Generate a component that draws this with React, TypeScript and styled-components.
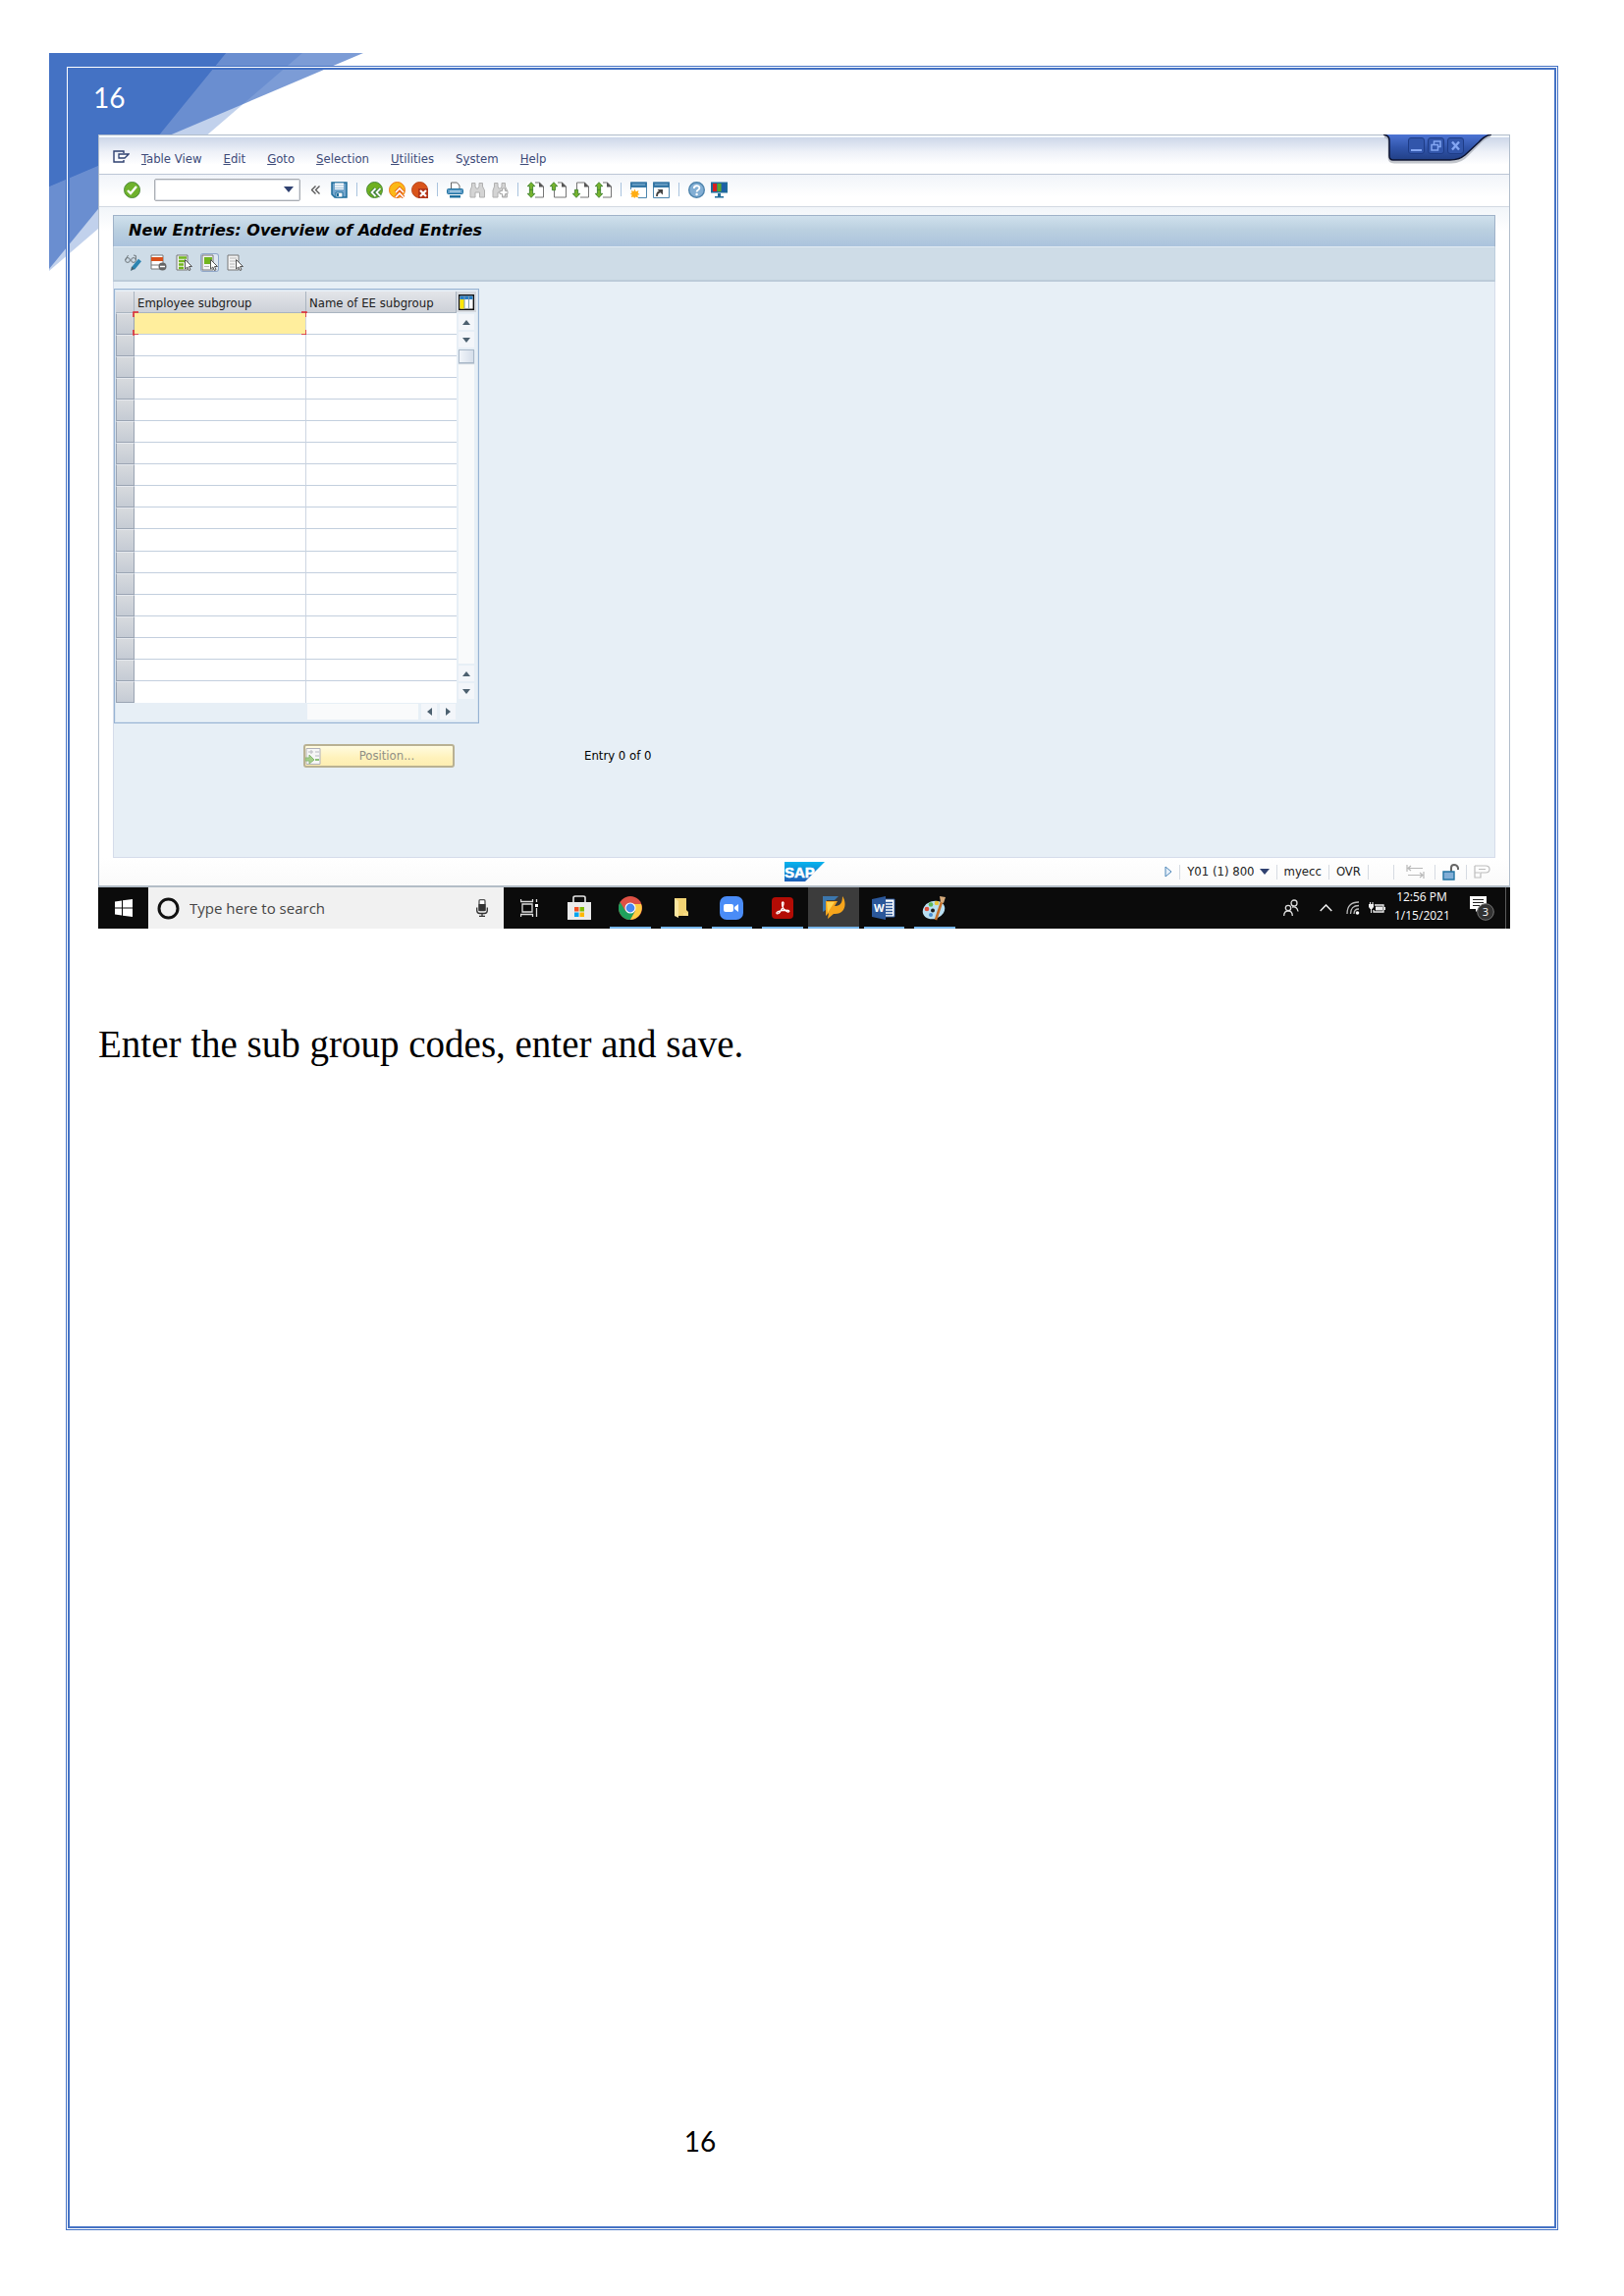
import React from "react";
import styled, { createGlobalStyle } from "styled-components";

const ui = `"DejaVu Sans Condensed", "Noto Sans", sans-serif`;
const segoe = `"Open Sans", "Noto Sans", sans-serif`;
const blue = "#4472c4";

const GlobalStyle = createGlobalStyle`
  *, *::before, *::after { box-sizing: border-box; }
  body { margin: 0; background: #fff; }
  button, input { font: inherit; color: inherit; margin: 0; padding: 0; border: 0; background: none; border-radius: 0; }
  svg { display: block; flex: none; }
`;

/* ---------- document page ---------- */

const Page = styled.div`
  position: relative;
  display: flex;
  min-height: 100vh;
  padding: 67px;
`;

const Corner = styled.svg`
  position: absolute;
  left: 50px;
  top: 54px;
`;

const Frame = styled.main`
  position: relative;
  display: flex;
  flex: 1;
  flex-direction: column;
  min-width: 0;
  border: 1px solid ${blue};
  box-shadow: inset 0 0 0 1px #fff, inset 0 0 0 3px ${blue};
`;

const PageHeader = styled.header`
  height: 69px;
  padding: 13px 27px 0;
  font: 28px/36px Lato, sans-serif;
  color: #fff;
`;

const Body = styled.div`
  padding: 0 48px 0 32px;
`;

const Paragraph = styled.p`
  margin: 96px 0 0;
  font: 39px/44px "Liberation Serif", serif;
  color: #000;
`;

const PageFooter = styled.footer`
  margin-top: auto;
  padding: 0 228px 72px 0;
  font: 28px/36px Lato, sans-serif;
  text-align: center;
  color: #000;
`;

/* ---------- application window ---------- */

const Shot = styled.section`
  font: 13px/16px ${ui};
  color: #1c1c1c;
`;

const Window = styled.div`
  position: relative;
  border: 1px solid #b1bdcb;
  border-bottom: 2px solid #b3bdc7;
  background: #fff;
`;

const MenuBar = styled.nav`
  display: flex;
  align-items: center;
  gap: 22px;
  height: 40px;
  padding: 6px 14px 0;
  border-bottom: 1px solid #bcc6d6;
  border-top: 2px solid #f4f8fd;
  background: linear-gradient(#cdd7e9, #eef1f8 40%, #fff 75%);
  color: #3d4a78;
`;

const MenuIcon = styled.button`
  margin: 0 -10px 4px 0;
`;

const MenuItem = styled.button`
  white-space: nowrap;
`;

const ToolBar = styled.div`
  display: flex;
  align-items: center;
  gap: 6px;
  height: 33px;
  padding: 0 26px 2px 25px;
  border-bottom: 1px solid #d3d9e2;
  background: linear-gradient(#f1f4f9, #fff 70%);
`;

const CommandBox = styled.label`
  display: flex;
  align-items: center;
  width: 149px;
  height: 23px;
  margin: 0 1px 0 8px;
  padding-right: 6px;
  border: 1px solid #a9adb3;
  border-radius: 2px;
  background: #fff;
  box-shadow: inset 0 0 0 1px #dfe2e7;
`;

const CommandInput = styled.input`
  flex: 1;
  min-width: 0;
  height: 19px;
  padding: 0 4px;
  outline: 0;
`;

const IconButton = styled.button<{ $on?: boolean }>`
  display: grid;
  place-items: center;
  width: 17px;
  height: 17px;
  border-radius: 2px;
  ${(p) => p.$on && "background:#dfe7f2; box-shadow:0 0 0 1px #8fa6c9;"}
`;

const Collapse = styled(IconButton)`
  width: 16px;
  margin-right: 2px;
`;

const Separator = styled.span`
  width: 1px;
  height: 14px;
  margin: 0 3px;
  background: #a9c3de;
`;

const WorkArea = styled.div`
  padding: 8px 14px 0;
  background: linear-gradient(#f1f5f9, #fff 24px);
`;

const Screen = styled.div`
  border: 1px solid #d5dcea;
  border-top: 0;
  background: #e7eff6;
`;

const TitleBar = styled.h1`
  height: 33px;
  margin: 0 -1px;
  padding: 0 15px;
  border: 1px solid #9fb2c8;
  border-bottom-color: #e2ebf3;
  background: linear-gradient(#cfe0ec, #bbd0e0 45%, #abc3dd);
  font: italic bold 16px/29px "DejaVu Sans", sans-serif;
  color: #000;
`;

const ActionBar = styled.div`
  display: flex;
  align-items: center;
  gap: 9px;
  height: 35px;
  margin: 0 -1px;
  padding: 0 11px 3px;
  border: 1px solid #bccddc;
  border-top: 0;
  border-bottom: 2px solid #bccbd9;
  background: #cedce7;
`;

const ScreenBody = styled.div`
  padding: 7px 0 91px;
`;

/* ---------- table control ---------- */

const TableControl = styled.div`
  display: grid;
  grid-template-columns: 347px 20px;
  grid-template-rows: 419px 18px;
  width: 372px;
  height: 443px;
  padding: 2px 1px;
  border: 1px solid #97b3d3;
  box-shadow: inset 0 0 0 1px #d9e5f0;
`;

const Grid = styled.table`
  width: 347px;
  border-collapse: separate;
  border-spacing: 0;
  table-layout: fixed;
  background: #fff;
`;

const HeadCell = styled.th<{ $w: number }>`
  width: ${(p) => p.$w}px;
  height: 22px;
  padding: 2px 0 0 3px;
  border-right: 1px solid #a9b4c0;
  border-bottom: 1px solid #a9b4c0;
  background: linear-gradient(#e3e5e9, #cdd1d8);
  font-weight: normal;
  text-align: left;
  white-space: nowrap;
`;

const RowHandle = styled.th`
  height: 22px;
  padding: 0;
  border: 1px solid #9aa4b3;
  border-top-color: #e6e9ee;
  background: linear-gradient(#d7dade, #c5cbd4);
`;

const Cell = styled.td<{ $active?: boolean }>`
  position: relative;
  height: 22px;
  padding: 0;
  border-right: 1px solid #cdd6e2;
  border-bottom: 1px solid #c3cfde;
  background: ${(p) => (p.$active ? "#ffee9d" : "#fff")};
  tr:last-child > & { border-bottom: 0; }
  &:last-child { border-right: 0; }
`;

const CellInput = styled.input`
  display: block;
  width: 100%;
  height: 20px;
  padding: 0 3px;
  outline: 0;
`;

const FocusMarks = styled.svg`
  position: absolute;
  left: -2px;
  top: -2px;
  pointer-events: none;
`;

const VScroll = styled.div`
  display: flex;
  flex-direction: column;
  align-items: center;
  gap: 2px;
  padding-bottom: 4px;
`;

const ConfigButton = styled.button`
  display: grid;
  place-items: center;
  width: 20px;
  height: 21px;
  background: #d4d8de;
`;

const ScrollButton = styled.button`
  display: grid;
  place-items: center;
  width: 16px;
  height: 16px;
  background: #f3f6fa;
`;

const VTrack = styled.div`
  flex: 1;
  width: 16px;
  background: #f9fafb;
`;

const Thumb = styled.div`
  height: 14px;
  border: 1px solid #a9b8c8;
  background: linear-gradient(90deg, #f1f5fa, #d5deea);
  box-shadow: 0 1px 1px #c5ced9;
`;

const HScroll = styled.div`
  display: flex;
  gap: 3px;
  padding: 1px 1px 0 195px;
`;

const HTrack = styled.div`
  flex: 1;
  height: 16px;
  background: #f9fafb;
`;

const EntryRow = styled.div`
  display: flex;
  align-items: center;
  gap: 132px;
  padding: 21px 193px 0;
  color: #000;
`;

const PositionButton = styled.button`
  display: flex;
  align-items: center;
  width: 154px;
  height: 24px;
  border: 2px solid #b9b193;
  border-radius: 3px;
  background: linear-gradient(#fffbe0, #fff2bb 60%, #fdeeb2);
  color: #8f8f86;
`;

const ButtonText = styled.span`
  flex: 1;
  text-align: center;
`;

/* ---------- status bar ---------- */

const StatusBar = styled.footer`
  display: grid;
  grid-template-columns: 1fr auto 1fr;
  align-items: center;
  height: 28px;
  background: linear-gradient(#fff, #fafafa);
`;

const StatusItems = styled.div`
  display: flex;
  align-items: center;
  justify-content: flex-end;
  gap: 7px;
  padding-right: 19px;
  color: #222;
`;

const Tick = styled.span<{ $lead?: number }>`
  width: 1px;
  height: 15px;
  margin-left: ${(p) => p.$lead || 0}px;
  background: #d6dbe2;
`;

const StatusButton = styled.button`
  display: flex;
  align-items: center;
  gap: 5px;
`;

/* ---------- window caption ---------- */

const Caption = styled.div`
  position: absolute;
  top: -1px;
  right: 17px;
  width: 112px;
  height: 30px;
`;

const CaptionShape = styled.svg`
  position: absolute;
  inset: 0;
`;

const CaptionButtons = styled.div`
  position: relative;
  display: flex;
  gap: 3px;
  padding: 3px 26px;
`;

const CaptionButton = styled.button`
  display: grid;
  place-items: center;
  width: 17px;
  height: 17px;
  border: 1px solid #1e3c86;
  border-radius: 3px;
  background: #3256ab;
`;

/* ---------- taskbar ---------- */

const TaskBar = styled.div`
  display: flex;
  align-items: stretch;
  height: 42px;
  background: #0b0b0b;
  font-family: ${segoe};
  color: #fff;
`;

const Start = styled.button`
  display: grid;
  place-items: center;
  width: 51px;
`;

const Search = styled.label`
  display: flex;
  align-items: center;
  gap: 10px;
  width: 362px;
  padding: 0 16px 0 9px;
  background: #f1f1f1;
`;

const SearchInput = styled.input`
  flex: 1;
  min-width: 0;
  font: 15px/20px ${segoe};
  outline: 0;
  &::placeholder { color: #454545; opacity: 1; }
`;

const Apps = styled.nav`
  display: grid;
  grid-template-columns: repeat(9, 1fr);
  width: 465px;
`;

const AppButton = styled.button<{ $open?: boolean; $front?: boolean }>`
  display: grid;
  place-items: center;
  position: relative;
  background: ${(p) => (p.$front ? "#3c3c3c" : "none")};
  &::after {
    content: "";
    position: absolute;
    left: ${(p) => (p.$front ? 0 : 5)}px;
    right: ${(p) => (p.$front ? 0 : 5)}px;
    bottom: 0;
    height: 2px;
    background: ${(p) => (p.$open ? "#76b5ea" : "none")};
  }
`;

const Tray = styled.div`
  display: flex;
  align-items: center;
  gap: 9px;
  margin-left: auto;
  padding-right: 4px;
`;

const TrayButton = styled.button<{ $lead?: number }>`
  margin-left: ${(p) => p.$lead || 0}px;
`;

const Clock = styled.time`
  width: 56px;
  padding-bottom: 4px;
  font-size: 12px;
  line-height: 19px;
  text-align: center;
  white-space: nowrap;
`;

const ShowDesktop = styled.button`
  width: 1px;
  height: 42px;
  margin-left: 2px;
  background: #5a5a5a;
`;

/* ---------- icons ---------- */

const I = ({ children, w = 17, h = 17 }: { children: React.ReactNode; w?: number; h?: number }) => (
  <svg width={w} height={h} viewBox={`0 0 ${w} ${h}`} fill="none" aria-hidden="true">{children}</svg>
);

const Down = ({ color = "#2f4170" }) => <I w={10} h={6}><path d="M0 0h10L5 6z" fill={color} /></I>;

const Check = () => (
  <I><circle cx="8.500" cy="8.500" r="8" fill="#6fb22c" stroke="#4f8a3c" /><path d="M4 9l3 3 6-7" stroke="#fff" strokeWidth="2.400" /></I>
);
const Save = () => (
  <I><path d="M1 1h15v15H4l-3-3z" fill="#74a6cc" stroke="#1d6c9b" strokeWidth="1.500" /><path d="M4 1.500h9V8H4z" fill="#fff" /><path d="M4 4h9M4 6.500h9" stroke="#9dbfd8" /><path d="M5 11h7v5H5z" fill="#fff" stroke="#1d6c9b" /><path d="M6 12h2v3H6z" fill="#1d6c9b" /></I>
);
const Back = () => (
  <I><circle cx="8.500" cy="8.500" r="8" fill="#6fb01f" stroke="#4a8b3c" /><path d="M9.500 7l-4 4 4 4M14.500 7l-4 4 4 4" stroke="#34783a" strokeWidth="3.400" /><path d="M9.500 7l-4 4 4 4M14.500 7l-4 4 4 4" stroke="#fff" strokeWidth="1.800" /></I>
);
const Exit = () => (
  <I><circle cx="8.500" cy="8.500" r="8" fill="#fbb917" stroke="#ef7b1a" /><path d="M7 11l4-4 4 4M7 16l4-4 4 4" stroke="#e8661b" strokeWidth="3.600" /><path d="M7 11l4-4 4 4M7 16l4-4 4 4" stroke="#fff" strokeWidth="1.600" /></I>
);
const Cancel = () => (
  <I><circle cx="8.500" cy="8.500" r="8" fill="#d9541a" stroke="#b9481c" /><path d="M7 7h10v10H7z" fill="#b23518" /><path d="M9 9l6 6M15 9l-6 6" stroke="#fff" strokeWidth="2.200" /></I>
);
const Print = () => (
  <I><path d="M4.500 7V1h6l2.500 3v3" fill="#fff" stroke="#666" /><rect x=".5" y="7.500" width="16" height="5" rx="1" fill="#5c9cc7" stroke="#20719f" /><path d="M3 10h11" stroke="#d6e8f4" /><path d="M3 14h11v2.500H3z" fill="#20719f" /></I>
);
const binoc = "M2.500 5V1.500h3.500V5l1 2h2l1-2V1.500h3.500V5l2 4v7h-5v-5H6v5H1V9z";
const Find = () => <I><path d={binoc} fill="#d4d4d4" stroke="#b0b0b0" /></I>;
const FindNext = () => (
  <I><path d={binoc} fill="#d4d4d4" stroke="#b0b0b0" /><path d="M10.500 7h3v2.500H16v3h-2.500V15h-3v-2.500H8v-3h2.500z" fill="#fff" stroke="#a9a9a9" /></I>
);
const PageIcon = ({ up, down }: { up?: boolean; down?: boolean }) => (
  <I>
    <path d="M4.500 1h8l4 4v11h-12z" fill="#fff" stroke="#757575" />
    <path d="M12 .5v5h5z" fill="#555" />
    {up && <path d="M0 0h8v8.500H0z" fill="#fff" />}
    {down && <path d="M0 8.500h8V17H0z" fill="#fff" />}
    {up && <path d="M4 .7l3.800 4H5.600v4H2.400v-4H.2z" fill="#76b32c" stroke="#40822f" strokeWidth=".9" />}
    {down && <path d="M4 16.300l3.800-4H5.600v-4H2.400v4H.2z" fill="#76b32c" stroke="#40822f" strokeWidth=".9" />}
  </I>
);
const NewWindow = () => (
  <I><path d="M.5 1h16v15.500H.5z" fill="#fff" stroke="#4c86ae" /><path d="M0 .5h17V6H0z" fill="#3677a5" /><path d="M2 3h13" stroke="#8dbada" /><path d="M0 8h8v9H0z" fill="#fff" /><path d="M4.500 7.500l1.200 2.700L8.500 9l-.8 2.800 2 1.200-2.400.7.700 2.800-2.600-.9-1.200 1.400-1-1.500L.8 16l.8-2.400L0 12.500l1.600-1.200L.8 9l2.600 1z" fill="#ffad12" /></I>
);
const Shortcut = () => (
  <I><path d="M.5 1h16v15.500H.5z" fill="#fff" stroke="#4c86ae" /><path d="M0 .5h17V6H0z" fill="#3677a5" /><path d="M2 3h13" stroke="#8dbada" /><path d="M4 15c0-3 1-4.500 3.500-4.500" stroke="#444" strokeWidth="1.800" /><path d="M4.500 8H10v5.500z" fill="#444" /></I>
);
const Help = () => (
  <I><circle cx="8.500" cy="8.500" r="7.800" fill="#82aed4" stroke="#4d83ac" strokeWidth="1.400" /><path d="M5.800 7c0-3.600 5.600-3.600 5.600-.4C11.400 8.600 8.600 8.500 8.600 10.500" stroke="#fff" strokeWidth="1.800" /><circle cx="8.600" cy="13" r="1.200" fill="#fff" /></I>
);
const Monitor = () => (
  <I><path d="M0 .5h17v11H0z" fill="#1f6b9a" /><path d="M2 2h4v8H2z" fill="#d81e1e" /><path d="M6.500 2h4v8h-4z" fill="#5da72c" /><path d="M11 2h4v8h-4z" fill="#1d5fa8" /><path d="M7 12h3v3h3v1.500H4V15h3z" fill="#1f6b9a" /></I>
);
const Glasses = () => (
  <I><circle cx="3" cy="6" r="2.400" stroke="#6f777c" /><circle cx="9" cy="6" r="2.400" stroke="#6f777c" /><path d="M.7 6l2.800-5M11.400 6V1.500L9 1" stroke="#6f777c" /><path d="M15.500 6L8.500 14.500" stroke="#2b84b0" strokeWidth="4" /><path d="M6 17l1-4.500 3 2.500z" fill="#41606f" /></I>
);
const DeleteRow = () => (
  <I><path d="M1 1h12v14H1z" fill="#fff" stroke="#777" /><path d="M1 3h12v4H1z" fill="#d9501a" /><path d="M1 11h12" stroke="#777" /><circle cx="12.500" cy="12.500" r="4" fill="#666" /><path d="M10 12.500h5" stroke="#fff" strokeWidth="1.500" /></I>
);
const Select = ({ kind }: { kind: "all" | "block" | "none" }) => (
  <I>
    <path d="M1 1h11v15H1z" fill="#f5f5f5" stroke="#777" />
    {kind === "none" && <path d="M3 4h7M3 7h7M3 10h5M3 13h5" stroke="#b5b5b5" />}
    {kind === "all" && <path d="M3 3.500h8M3 7h7M3 10.500h5M3 14h5" stroke="#72b51e" strokeWidth="2.500" />}
    {kind === "block" && <><path d="M3 3h8v7H3z" fill="#72b51e" /><path d="M3 12.500h5" stroke="#b5b5b5" /></>}
    <path d="M9.500 5.500V15l2.300-2 1.500 3.500 1.700-.7-1.500-3.300h3z" fill="#fff" stroke="#555" />
  </I>
);

const Chrome = () => (
  <I w={24} h={24}>
    <circle cx="12" cy="12" r="12" fill="#de5145" />
    <path d="M1.600 6A12 12 0 0 0 12 24l5-9-5 2-5-2z" fill="#1fa15d" />
    <path d="M23 8H12l5 7-5 9A12 12 0 0 0 23 8z" fill="#fccd43" />
    <circle cx="12" cy="12" r="5.500" fill="#fff" /><circle cx="12" cy="12" r="4.400" fill="#4688f1" />
  </I>
);
const Store = () => (
  <I w={24} h={26}><path d="M6 8V2.500Q6 1 8 1h8q2 0 2 1.500V8" stroke="#e4e4e4" strokeWidth="1.600" /><path d="M0 7h24v18H0z" fill="#ebebeb" /><path d="M7 12h4.500v4.500H7z" fill="#f25022" /><path d="M12.500 12H17v4.500h-4.500z" fill="#7fba00" /><path d="M7 17.500h4.500V22H7z" fill="#00a4ef" /><path d="M12.500 17.500H17V22h-4.500z" fill="#ffb900" /></I>
);
const TaskView = () => (
  <I w={18} h={18}><path d="M2 5h10v8H2zM.5 0v2.500h12V0M.5 18v-2.500h12V18M16.500 0v3M16.500 9v9" stroke="#ddd" strokeWidth="1.300" /><path d="M15 5h3v3h-3z" fill="#fff" /></I>
);
const Folder = () => (
  <I w={16} h={20}><path d="M1 0h12v12l2 2v4H1z" fill="#f3d475" /><path d="M1 0l4 3v17l-4-2z" fill="#fbe7a2" /><path d="M10 15h5v3h-5z" fill="#f9dc84" /></I>
);
const Zoom = () => (
  <I w={24} h={24}><rect width="24" height="24" rx="7" fill="#4a8cf7" /><rect x="4" y="8" width="10" height="8" rx="2" fill="#fff" /><path d="M15 11l4-3v8l-4-3z" fill="#fff" /></I>
);
const Acrobat = () => (
  <I w={22} h={22}><rect width="22" height="22" rx="4" fill="#b30c05" /><path d="M5 16.500c-1-1.500 5-4 12-3 1.500.5.500 2-1 1.500C13 14 10 10 10.500 6c.5-2 2-1 1.500 1-.5 3.500-3.500 8.500-5 9.500-1 .5-1.800.5-2 0z" stroke="#fff" strokeWidth="1.300" /></I>
);
const SapGui = () => (
  <I w={24} h={24}><path d="M1 0h16l-4 4H5l-1 10-3 2z" fill="#3c77ad" /><path d="M4 5h12l-3 5c5 0 8-2 8-10 5 7 3 19-9 18l-6 5 1-6-3 3z" fill="#f6a51c" /><path d="M5 6h8l-4 6-3 5z" fill="#ffd451" /></I>
);
const Word = () => (
  <I w={24} h={24}><path d="M12 3h11v18H12z" fill="#fff" stroke="#2b579a" /><path d="M14 6.500h7M14 9.500h7M14 12.500h7M14 15.500h7M14 18.500h7" stroke="#2b579a" strokeWidth="1.300" /><path d="M0 3l14-3v24L0 21z" fill="#2b579a" /><text x="2" y="16" fontSize="11" fontWeight="bold" fontFamily="Open Sans, sans-serif" fill="#fff">W</text></I>
);
const Paint = () => (
  <I w={26} h={26}><ellipse cx="12" cy="15" rx="11.500" ry="9" transform="rotate(-20 12 15)" fill="#b9dff2" /><circle cx="5" cy="14" r="2.300" fill="#e2503c" /><circle cx="9" cy="9.500" r="2.300" fill="#5cb755" /><circle cx="15" cy="8" r="2.300" fill="#e8c33b" /><circle cx="11" cy="15.500" r="2" fill="#1b1b1b" /><circle cx="9" cy="20" r="2" fill="#4a8dd0" /><path d="M21 4l-7 21" stroke="#c4702b" strokeWidth="2.600" /><path d="M18 1l6 1-2 6-3-1z" fill="#d6ab7c" /></I>
);

/* ---------- content ---------- */

const menus: [string, string, string][] = [
  ["", "T", "able View"], ["", "E", "dit"], ["", "G", "oto"], ["", "S", "election"],
  ["", "U", "tilities"], ["S", "y", "stem"], ["", "H", "elp"],
];

const toolGroups: [string, React.ReactNode][][] = [
  [["Save", <Save />]],
  [["Back", <Back />], ["Exit", <Exit />], ["Cancel", <Cancel />]],
  [["Print", <Print />], ["Find", <Find />], ["Find next", <FindNext />]],
  [["First page", <PageIcon up down />], ["Previous page", <PageIcon up />], ["Next page", <PageIcon down />], ["Last page", <PageIcon up down />]],
  [["New session", <NewWindow />], ["Create shortcut", <Shortcut />]],
  [["Help", <Help />], ["Customize layout", <Monitor />]],
];

const actions: [string, React.ReactNode, boolean?][] = [
  ["Display or change", <Glasses />], ["Delete row", <DeleteRow />], ["Select all", <Select kind="all" />],
  ["Select block", <Select kind="block" />, true], ["Deselect all", <Select kind="none" />],
];

const apps: [string, React.ReactNode, boolean, boolean?][] = [
  ["Task view", <TaskView />, false], ["Store", <Store />, false], ["Chrome", <Chrome />, true],
  ["File Explorer", <Folder />, true], ["Zoom", <Zoom />, true], ["Acrobat", <Acrobat />, true],
  ["SAP Logon", <SapGui />, true, true], ["Word", <Word />, true], ["Paint", <Paint />, true],
];

const rows = Array.from({ length: 18 }, (_, i) => i);
const scrollColor = "#4d6170";
const Up = () => <I w={8} h={5}><path d="M0 5h8L4 0z" fill={scrollColor} /></I>;
const Dn = () => <I w={8} h={5}><path d="M0 0h8L4 5z" fill={scrollColor} /></I>;

function EntryTable() {
  return (
    <TableControl>
      <Grid>
        <thead>
          <tr>
            <HeadCell $w={19} aria-label="Row" />
            <HeadCell $w={175} scope="col">Employee subgroup</HeadCell>
            <HeadCell $w={153} scope="col">Name of EE subgroup</HeadCell>
          </tr>
        </thead>
        <tbody>
          {rows.map((r) => (
            <tr key={r}>
              <RowHandle scope="row" aria-label={`Row ${r + 1}`} />
              <Cell $active={r === 0}>
                <CellInput aria-label={`Employee subgroup, row ${r + 1}`} />
                {r === 0 && (
                  <FocusMarks width="178" height="25" viewBox="0 0 178 25" fill="none" stroke="#e0252b" strokeWidth="1.500">
                    <path d="M1 6V1h5M172 1h5v5M177 19v5h-5M6 24H1v-5" />
                  </FocusMarks>
                )}
              </Cell>
              <Cell><CellInput aria-label={`Name of EE subgroup, row ${r + 1}`} /></Cell>
            </tr>
          ))}
        </tbody>
      </Grid>
      <VScroll>
        <ConfigButton aria-label="Configure columns">
          <I w={16} h={16}><path d="M.7.700h14.600v14.600H.7z" fill="#fff" stroke="#111" strokeWidth="1.400" /><path d="M1.500 1.500h13V5h-13z" fill="#2a7fc4" /><path d="M1.500 5H6v9.500H1.500z" fill="#ffe600" /><path d="M6 2v12.500M10.500 2v12.500" stroke="#7e9bb1" /></I>
        </ConfigButton>
        <ScrollButton aria-label="Scroll up"><Up /></ScrollButton>
        <ScrollButton aria-label="Scroll down"><Dn /></ScrollButton>
        <VTrack><Thumb /></VTrack>
        <ScrollButton aria-label="Page up"><Up /></ScrollButton>
        <ScrollButton aria-label="Page down"><Dn /></ScrollButton>
      </VScroll>
      <HScroll>
        <HTrack />
        <ScrollButton aria-label="Scroll left"><I w={5} h={8}><path d="M5 0v8L0 4z" fill={scrollColor} /></I></ScrollButton>
        <ScrollButton aria-label="Scroll right"><I w={5} h={8}><path d="M0 0v8l5-4z" fill={scrollColor} /></I></ScrollButton>
      </HScroll>
    </TableControl>
  );
}

function SapWindow() {
  return (
    <Window>
      <MenuBar>
        <MenuIcon aria-label="System menu">
          <I w={17} h={14}><path d="M11 3V1H1v11h10v-2" stroke="#2f4170" strokeWidth="1.400" /><path d="M6 4h10l-4 4H6z" fill="#fff" stroke="#2f4170" strokeWidth="1.300" /></I>
        </MenuIcon>
        {menus.map(([a, k, b]) => (
          <MenuItem key={k + b}>{a}<u>{k}</u>{b}</MenuItem>
        ))}
      </MenuBar>
      <ToolBar>
        <IconButton aria-label="Enter"><Check /></IconButton>
        <CommandBox>
          <CommandInput aria-label="Command" />
          <Down />
        </CommandBox>
        <Collapse aria-label="Hide command field">
          <I w={9} h={9}><path d="M4.500.5l-4 4 4 4M8.500.5l-4 4 4 4" stroke="#555" strokeWidth="1.300" /></I>
        </Collapse>
        {toolGroups.map((group, g) => (
          <React.Fragment key={g}>
            {g > 0 && <Separator />}
            {group.map(([name, icon]) => <IconButton key={name} aria-label={name}>{icon}</IconButton>)}
          </React.Fragment>
        ))}
      </ToolBar>
      <WorkArea>
        <Screen>
          <TitleBar>New Entries: Overview of Added Entries</TitleBar>
          <ActionBar>
            {actions.map(([name, icon, on]) => <IconButton key={name} $on={on} aria-label={name}>{icon}</IconButton>)}
          </ActionBar>
          <ScreenBody>
            <EntryTable />
            <EntryRow>
              <PositionButton>
                <I w={16} h={17}><path d="M1 .5h14v16H1z" fill="#f6f6f6" stroke="#b0b0b8" /><path d="M3 4h5M10 4h4M10 8h4M6 2v4" stroke="#b8b8c0" /><path d="M10 12h4" stroke="#8cbf78" strokeWidth="2" /><path d="M0 10h4V7l5 5-5 4v-3H0z" fill="#a4cf87" stroke="#8cb878" /></I>
                <ButtonText>Position...</ButtonText>
              </PositionButton>
              <span>Entry 0 of 0</span>
            </EntryRow>
          </ScreenBody>
        </Screen>
      </WorkArea>
      <StatusBar>
        <span />
        <svg width="41" height="20" viewBox="0 0 41 20" role="img" aria-label="SAP">
          <defs><linearGradient id="sap" x2="0" y2="1"><stop stopColor="#06b4ee" /><stop offset="1" stopColor="#1d5fb8" /></linearGradient></defs>
          <path d="M0 0h41L21 20H0z" fill="url(#sap)" />
          <text x="0" y="16" fontSize="15" fontWeight="bold" fontFamily="Liberation Sans, sans-serif" fill="#fff" stroke="#fff" strokeWidth=".5">SAP</text>
        </svg>
        <StatusItems>
          <I w={8} h={12}><path d="M1 1l6 5-6 5z" fill="#e6f0fa" stroke="#4d86b8" /></I>
          <Tick />
          <StatusButton>Y01 (1) 800 <Down /></StatusButton>
          <Tick />
          <span>myecc</span>
          <Tick />
          <span>OVR</span>
          <Tick />
          <Tick $lead={18} />
          <I w={27} h={14}><path d="M6 0v7M6 3.500h16M10 1L7 3.500 10 6M23 7v7M7 10.500h15M19 8l3 2.500-3 2.500" stroke="#b9b9b9" strokeWidth="1.200" /></I>
          <Tick />
          <I w={17} h={17}><path d="M9 8V4q0-3 3-3t4 3v2" stroke="#666" strokeWidth="2" /><path d="M1 8h11v8H1z" fill="#82aed6" stroke="#2173a2" strokeWidth="1.400" /></I>
          <Tick />
          <I w={17} h={14}><path d="M1 1h11q4 0 4 3.500T12 8H7v5H1V8h5M1 1v7M5 4.500h7" stroke="#bdbdbd" strokeWidth="1.200" /></I>
        </StatusItems>
      </StatusBar>
      <Caption>
        <CaptionShape width="112" height="30" viewBox="0 0 112 30">
          <defs><linearGradient id="cap" x2="0" y2="1"><stop stopColor="#4d74d4" /><stop offset=".5" stopColor="#3155ab" /><stop offset="1" stopColor="#213f86" /></linearGradient></defs>
          <path d="M2 2q5 0 5 6v15q0 5 5 5h58q10 0 17-8l10-10q6-7 13-9" fill="none" stroke="#8a8f9a" strokeOpacity=".5" strokeWidth="3" />
          <path d="M1 0q6 1 6 6v16q0 4 4 4h58q9 0 15-5L98 8q6-7 13-8z" fill="url(#cap)" />
          <path d="M1 0q6 1 6 6v16q0 4 4 4h58q9 0 15-5L98 8q6-7 13-8" fill="none" stroke="#0b1230" strokeWidth="1.500" />
        </CaptionShape>
        <CaptionButtons>
          <CaptionButton aria-label="Minimize"><I w={11} h={11}><path d="M0 10h11" stroke="#84a6f2" strokeWidth="2" /></I></CaptionButton>
          <CaptionButton aria-label="Restore"><I w={11} h={11}><path d="M3.500 4V1H10v5.500H8M1 4.500h6.500V10H1z" stroke="#84a6f2" strokeWidth="1.500" /></I></CaptionButton>
          <CaptionButton aria-label="Close"><I w={11} h={11}><path d="M2 1.500l7 8M9 1.500l-7 8" stroke="#84a6f2" strokeWidth="2.400" /></I></CaptionButton>
        </CaptionButtons>
      </Caption>
    </Window>
  );
}

function Taskbar() {
  return (
    <TaskBar>
      <Start aria-label="Start">
        <I w={18} h={18}><path d="M0 2.500l7-1v7H0zM8 1.300L18 0v8.500H8zM0 9.500h7v7l-7-1zM8 9.500h10V18L8 16.700z" fill="#fff" /></I>
      </Start>
      <Search>
        <I w={23} h={23}><circle cx="11.500" cy="11.500" r="9.500" stroke="#111" strokeWidth="3" /></I>
        <SearchInput aria-label="Search" placeholder="Type here to search" />
        <I w={12} h={18}><rect x="3" y=".7" width="6" height="11" rx="1" fill="#fff" stroke="#555" strokeWidth="1.300" /><path d="M2.500 5h7v7h-7z" fill="#333" /><path d="M.7 8.500v3q0 3 3 3h4.600q3 0 3-3v-3M6 14.500V17M3 17.300h6" stroke="#333" strokeWidth="1.300" /></I>
      </Search>
      <Apps>
        {apps.map(([name, icon, open, front]) => (
          <AppButton key={name} $open={open} $front={front} aria-label={name}>{icon}</AppButton>
        ))}
      </Apps>
      <Tray>
        <TrayButton aria-label="People">
          <I w={16} h={18}><circle cx="11" cy="4" r="3" stroke="#ddd" strokeWidth="1.300" /><circle cx="5" cy="9" r="2.700" stroke="#ddd" strokeWidth="1.300" /><path d="M.7 17q0-5 4.300-5t4.300 5M9 8q5-1 6 4.500" stroke="#ddd" strokeWidth="1.300" /></I>
        </TrayButton>
        <TrayButton $lead={12} aria-label="Show hidden icons">
          <I w={13} h={8}><path d="M.7 7l5.800-6 5.800 6" stroke="#eee" strokeWidth="1.500" /></I>
        </TrayButton>
        <TrayButton $lead={5} aria-label="Network">
          <I w={14} h={14}><path d="M1 13Q1 1 13 1M4.500 13q0-8.500 8.500-8.500M8 13q0-5 5-5" stroke="#bbb" strokeWidth="1.300" /><circle cx="11.500" cy="12" r="1.800" fill="#fff" /></I>
        </TrayButton>
        <TrayButton aria-label="Battery">
          <I w={17} h={12}><path d="M6 3h9v7H5V8" stroke="#eee" strokeWidth="1.300" /><path d="M7 4.500h7v4H7zM15.500 5H17v3h-1.500zM0 2h5v3L3.500 7h-2L0 5zM1 0h1v2H1zM3.500 0h1v2h-1zM2 7h1v4H2z" fill="#eee" /></I>
        </TrayButton>
        <Clock>12:56 PM<br />1/15/2021</Clock>
        <TrayButton $lead={11} aria-label="3 notifications">
          <I w={26} h={26}>
            <path d="M1 1h17v13H10l-3 3v-3H1z" fill="#fff" /><path d="M4 4.500h11M4 7.500h11M4 10.500h7" stroke="#222" />
            <circle cx="17" cy="17" r="8.300" fill="#333" stroke="#777" />
            <text x="17" y="21" fontSize="11" textAnchor="middle" fontFamily="Open Sans, sans-serif" fill="#fff">3</text>
          </I>
        </TrayButton>
        <ShowDesktop aria-label="Show desktop" />
      </Tray>
    </TaskBar>
  );
}

export default function App() {
  return (
    <Page>
      <GlobalStyle />
      <Corner width="320" height="222" viewBox="0 0 320 222" fill={blue} aria-hidden="true">
        <path d="M0 0h258L0 222z" opacity=".33" />
        <path d="M0 0h320L0 136z" opacity=".7" />
        <path d="M0 0h180L0 220z" opacity=".7" />
        <path d="M0 0h180L106 91 0 136z" />
      </Corner>
      <Frame>
        <PageHeader>16</PageHeader>
        <Body>
          <Shot>
            <SapWindow />
            <Taskbar />
          </Shot>
          <Paragraph>Enter the sub group codes, enter and save.</Paragraph>
        </Body>
        <PageFooter>16</PageFooter>
      </Frame>
    </Page>
  );
}
